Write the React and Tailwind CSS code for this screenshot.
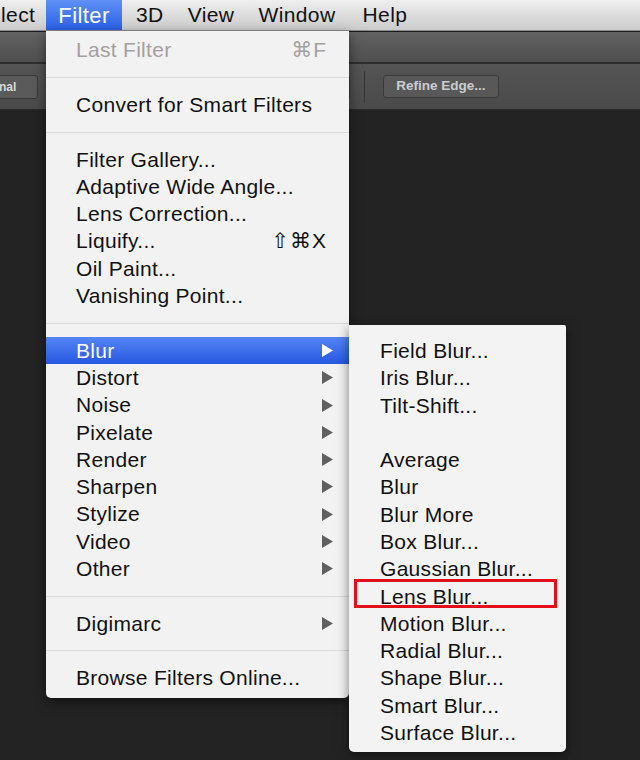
import React from 'react'

const font = { fontFamily: '"Liberation Sans", "DejaVu Sans", Arial, sans-serif' }

const filterMenu = [
  { label: 'Last Filter', shortcut: '⌘F', disabled: true },
  { sep: true },
  { label: 'Convert for Smart Filters' },
  { sep: true },
  { label: 'Filter Gallery...' },
  { label: 'Adaptive Wide Angle...' },
  { label: 'Lens Correction...' },
  { label: 'Liquify...', shortcut: '⇧⌘X' },
  { label: 'Oil Paint...' },
  { label: 'Vanishing Point...' },
  { sep: true },
  { label: 'Blur', sub: true, active: true },
  { label: 'Distort', sub: true },
  { label: 'Noise', sub: true },
  { label: 'Pixelate', sub: true },
  { label: 'Render', sub: true },
  { label: 'Sharpen', sub: true },
  { label: 'Stylize', sub: true },
  { label: 'Video', sub: true },
  { label: 'Other', sub: true },
  { sep: true },
  { label: 'Digimarc', sub: true },
  { sep: true },
  { label: 'Browse Filters Online...' },
]

const blurMenu = [
  'Field Blur...', 'Iris Blur...', 'Tilt-Shift...', null,
  'Average', 'Blur', 'Blur More', 'Box Blur...', 'Gaussian Blur...',
  'Lens Blur...', 'Motion Blur...', 'Radial Blur...', 'Shape Blur...',
  'Smart Blur...', 'Surface Blur...',
]

function Arrow({ white }) {
  return (
    <svg width="11" height="13" viewBox="0 0 11 13" className="shrink-0">
      <polygon points="0,0 11,6.5 0,13" fill={white ? '#ffffff' : '#5f5f5f'} />
    </svg>
  )
}

function MenuRow({ item }) {
  if (item.sep) {
    return (
      <div className="h-[27.3px] flex items-center">
        <div className="w-full h-px bg-[#d9d9d9]" />
      </div>
    )
  }
  return (
    <div className={`h-[27.3px] flex items-center justify-between pl-[30px] pr-[16px] text-[21px] tracking-[0.3px] ${
      item.active ? 'bg-gradient-to-b from-[#5584f4] to-[#2757e2] text-white' : item.disabled ? 'text-[#a59f9f]' : 'text-[#111]'
    }`}>
      <span>{item.label}</span>
      {item.shortcut && <span className="pr-[6px] tracking-[1px]">{item.shortcut}</span>}
      {item.sub && <Arrow white={item.active} />}
    </div>
  )
}

export default function App() {
  return (
    <div className="relative w-[640px] h-[760px] overflow-hidden bg-[#232323]" style={font}>
      {/* mac menu bar */}
      <div className="h-[31px] flex items-center bg-gradient-to-b from-[#efefef] to-[#cbcbcb] text-[21px] tracking-[0.4px] text-[#111] border-b border-[#8a8a8a]">
        <span className="w-[46px] pl-[1px]">lect</span>
        <span className="h-full w-[76px] flex items-center justify-center bg-gradient-to-b from-[#5f90f6] to-[#2b5fe5] text-white text-[22px]">Filter</span>
        <span className="ml-[14px]">3D</span>
        <span className="ml-[24px]">View</span>
        <span className="ml-[24px]">Window</span>
        <span className="ml-[27px]">Help</span>
      </div>

      {/* photoshop bars */}
      <div className="h-px bg-[#1c1c1c]" />
      <div className="h-[30px] bg-gradient-to-b from-[#626262] to-[#4f4f4f]" />
      <div className="h-[2px] bg-[#2e2e2e]" />
      <div className="h-[46px] bg-gradient-to-b from-[#545454] to-[#4a4a4a] flex items-center border-b border-[#2a2a2a]">
        <div className="h-[24px] w-[40px] -ml-[2px] rounded-r-[3px] bg-[#5a5a5a] border border-[#383838] flex items-center text-[12px] font-bold text-[#d8d8d8]">
          nal
        </div>
        <div className="ml-[300px] h-[24px] w-[12px] rounded-r-[3px] border border-[#383838] bg-[#505050]" />
        <div className="ml-[14px] h-[32px] w-px bg-[#333]" />
        <div className="ml-[18px] h-[23px] w-[116px] rounded-[3px] bg-[#585858] border border-[#3a3a3a] flex items-center justify-center text-[13.5px] font-bold text-[#c9cdd3]">
          Refine Edge...
        </div>
      </div>

      {/* filter menu */}
      <div className="absolute left-[46px] top-[31px] w-[303px] pt-[5.5px] pb-[6px] bg-[#f2f2f2] rounded-b-[5px] shadow-[0_4px_12px_rgba(0,0,0,0.5)]">
        {filterMenu.map((item, i) => <MenuRow key={i} item={item} />)}
      </div>

      {/* blur submenu */}
      <div className="absolute left-[349px] top-[325px] w-[217px] pt-[12px] pb-[6px] bg-[#f3f3f3] rounded-b-[5px] rounded-tr-[2px] shadow-[0_4px_12px_rgba(0,0,0,0.5)]">
        {blurMenu.map((label, i) =>
          label === null ? (
            <div key={i} className="h-[27.3px]" />
          ) : (
            <div key={i} className="relative h-[27.3px] flex items-center pl-[31px] text-[21px] tracking-[0.3px] text-[#111]">
              {label}
              {label === 'Lens Blur...' && (
                <span className="absolute left-[5px] right-[9px] -top-[4px] h-[29px] border-[3px] border-[#e3101c]" />
              )}
            </div>
          )
        )}
      </div>
    </div>
  )
}
